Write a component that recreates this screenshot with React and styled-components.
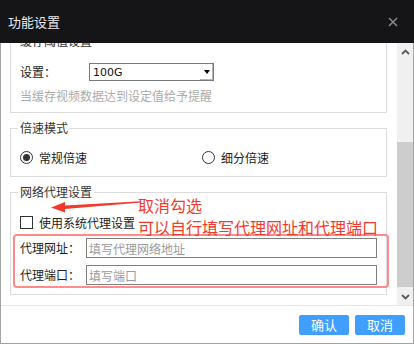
import React from "react";
import styled, { createGlobalStyle } from "styled-components";

const GlobalStyle = createGlobalStyle`
  html, body { margin: 0; padding: 0; background: #fff; }
  body {
    font-family: "Noto Sans CJK SC", "Noto Sans", sans-serif;
    font-size: 12px;
    color: #333;
  }
  * { box-sizing: border-box; }
`;

const Dialog = styled.div`
  width: 414px;
  height: 344px;
  display: flex;
  flex-direction: column;
  background: #fff;
`;

const Header = styled.div`
  height: 43px;
  flex: none;
  background: #151517;
  display: flex;
  align-items: center;
  justify-content: space-between;
  padding: 0 16px 0 8px;
`;

const Title = styled.div`
  color: #e8e8e8;
  font-size: 13px;
  line-height: 16px;
`;

const Close = styled.span`
  display: flex;
  width: 10px;
  height: 10px;
`;

const Body = styled.div`
  flex: 1;
  display: flex;
  flex-direction: column;
  border: 1px solid #a3a3a3;
  border-top: none;
`;

const Main = styled.div`
  height: 262px;
  flex: none;
  display: flex;
`;

const Viewport = styled.div`
  flex: 1;
  overflow: hidden;
`;

const Content = styled.div`
  margin-top: -10px;
  padding-left: 9px;
  display: flex;
  flex-direction: column;
  gap: 7px;
`;

const Group = styled.fieldset`
  position: relative;
  width: 377px;
  margin: 0;
  border: 1px solid #dcdcdc;
  padding: ${(p) => p.$pad};
  min-width: 0;
`;

const Legend = styled.legend`
  font-size: 12px;
  line-height: 16px;
  padding: 0 2px;
  margin-left: -2px;
  color: #333;
`;

const Row = styled.div`
  display: flex;
  align-items: center;
  height: ${(p) => p.$h || 16}px;
  margin-top: ${(p) => p.$mt || 0}px;
`;

const Label = styled.span`
  width: ${(p) => p.$w}px;
  flex: none;
  line-height: 16px;
  color: #222;
`;

const Select = styled.div`
  width: 125px;
  height: 18px;
  border: 1px solid #7a7a7a;
  display: flex;
  align-items: center;
  justify-content: space-between;
  padding-left: 3px;
  font-family: "DejaVu Sans", sans-serif;
  font-size: 11px;
  color: #111;
`;

const SelectBtn = styled.span`
  width: 13px;
  height: 16px;
  display: flex;
  align-items: center;
  justify-content: center;
  box-shadow: inset -1px -1px 0 #b5b5b5;
  &::after {
    content: "";
    border-left: 3.5px solid transparent;
    border-right: 3.5px solid transparent;
    border-top: 4px solid #000;
  }
`;

const Hint = styled.div`
  margin-top: 7px;
  line-height: 16px;
  color: #ababab;
`;

const Option = styled.label`
  display: flex;
  align-items: center;
  gap: 6px;
  width: ${(p) => p.$w || "auto"};
  color: #222;
`;

const Radio = styled.span`
  width: 13px;
  height: 13px;
  border-radius: 50%;
  border: 1px solid #333;
  display: flex;
  align-items: center;
  justify-content: center;
  &::after {
    content: "";
    width: 7px;
    height: 7px;
    border-radius: 50%;
    background: ${(p) => (p.$on ? "#333" : "transparent")};
  }
`;

const Check = styled.span`
  width: 13px;
  height: 13px;
  border: 1px solid #333;
  background: #fff;
`;

const Input = styled.div`
  width: 292px;
  height: 20px;
  border: 1px solid #7f7f7f;
  padding-left: 2px;
  display: flex;
  align-items: center;
  color: #9a9a9a;
  font-size: 12px;
`;

const Mark = styled.div`
  position: absolute;
  left: 2px;
  top: 34px;
  width: 376px;
  height: 54px;
  border: 2px solid #ff8a8a;
  border-radius: 4px;
  pointer-events: none;
`;

const Note = styled.div`
  position: absolute;
  left: 127px;
  top: -6px;
  font-size: 16px;
  line-height: 22px;
  color: #f23a2c;
  white-space: nowrap;
`;

const Arrow = styled.svg`
  position: absolute;
  left: 28px;
  top: 0px;
`;

const Scrollbar = styled.div`
  width: 16px;
  flex: none;
  background: #f0f0f0;
  display: flex;
  flex-direction: column;
`;

const ScrollBtn = styled.div`
  height: 17px;
  display: flex;
  align-items: center;
  justify-content: center;
`;

const Track = styled.div`
  flex: 1;
`;

const Thumb = styled.div`
  margin-top: 82px;
  height: 145px;
  background: #cdcdcd;
`;

const Footer = styled.div`
  flex: 1;
  border-top: 1px solid #e6e6e6;
  display: flex;
  justify-content: flex-end;
  align-items: flex-start;
  gap: 6px;
  padding: 9px 8px 0 0;
`;

const Button = styled.button`
  width: 50px;
  height: 20px;
  border: none;
  border-radius: 2px;
  background: #409eff;
  color: #fff;
  font-family: inherit;
  font-size: 13px;
  line-height: 20px;
  padding: 0;
`;

const Chevron = ({ up }) => (
  <svg width="9" height="6" viewBox="0 0 9 6">
    <path
      d={up ? "M1 5 L4.5 1.5 L8 5" : "M1 1 L4.5 4.5 L8 1"}
      fill="none"
      stroke="#5a5a5a"
      strokeWidth="1.8"
    />
  </svg>
);

export default function App() {
  return (
    <Dialog>
      <GlobalStyle />
      <Header>
        <Title>功能设置</Title>
        <Close>
          <svg width="10" height="10" viewBox="0 0 10 10">
            <path d="M1 1 L9 9 M9 1 L1 9" stroke="#8a8a8a" strokeWidth="1.5" />
          </svg>
        </Close>
      </Header>
      <Body>
        <Main>
          <Viewport>
            <Content>
              <Group $pad="14px 9px 8px">
                <Legend>缓存阈值设置</Legend>
                <Row $h={18}>
                  <Label $w={69}>设置：</Label>
                  <Select>
                    100G
                    <SelectBtn />
                  </Select>
                </Row>
                <Hint>当缓存视频数据达到设定值给予提醒</Hint>
              </Group>

              <Group $pad="13px 9px 11px">
                <Legend>倍速模式</Legend>
                <Row>
                  <Option $w="182px">
                    <Radio $on />
                    常规倍速
                  </Option>
                  <Option>
                    <Radio />
                    细分倍速
                  </Option>
                </Row>
              </Group>

              <Group $pad="14px 9px 9px">
                <Legend>网络代理设置</Legend>
                <Row>
                  <Option>
                    <Check />
                    使用系统代理设置
                  </Option>
                </Row>
                <Row $h={20} $mt={8}>
                  <Label $w={66}>代理网址：</Label>
                  <Input>填写代理网络地址</Input>
                </Row>
                <Row $h={20} $mt={7}>
                  <Label $w={66}>代理端口：</Label>
                  <Input>填写端口</Input>
                </Row>
                <Mark />
                <Arrow width="106" height="14" viewBox="0 0 106 14">
                  <path d="M102 1.2 L26 5.6 L26 2 L12 7.5 L26 12.6 L26 9 L102 2.6 Z" fill="#f23a2c" />
                </Arrow>
                <Note>
                  取消勾选
                  <br />
                  可以自行填写代理网址和代理端口
                </Note>
              </Group>
            </Content>
          </Viewport>
          <Scrollbar>
            <ScrollBtn>
              <Chevron up />
            </ScrollBtn>
            <Track>
              <Thumb />
            </Track>
            <ScrollBtn>
              <Chevron />
            </ScrollBtn>
          </Scrollbar>
        </Main>
        <Footer>
          <Button>确认</Button>
          <Button>取消</Button>
        </Footer>
      </Body>
    </Dialog>
  );
}
